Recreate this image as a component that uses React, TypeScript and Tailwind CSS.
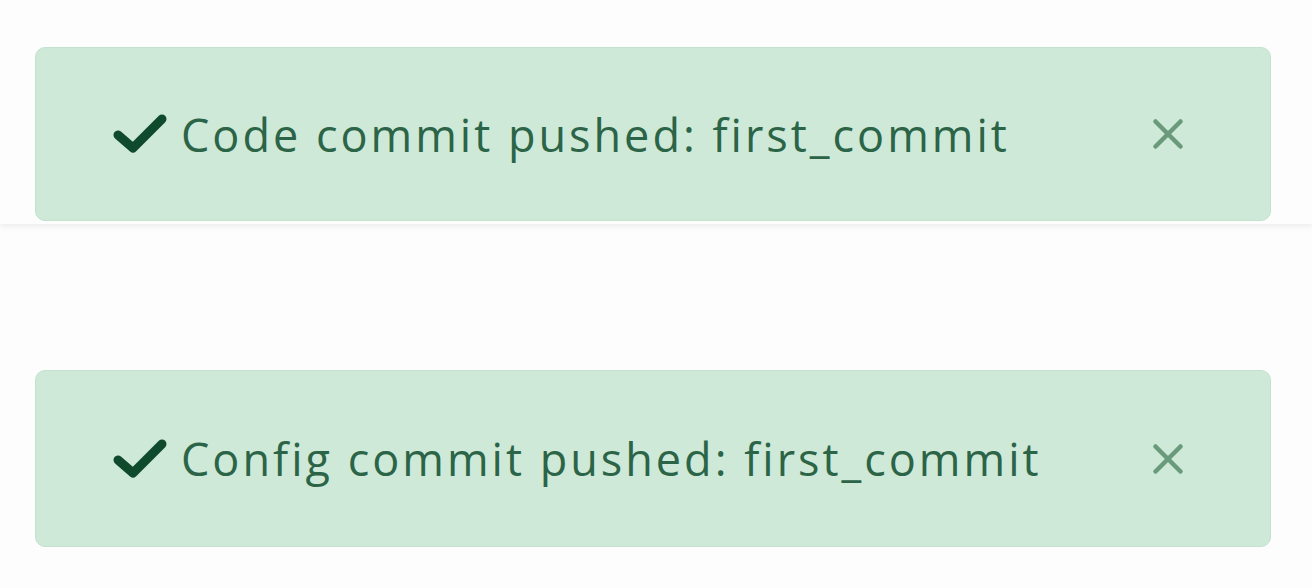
import { X } from 'lucide-react';

function CheckIcon() {
  return (
    <svg width="54" height="42" viewBox="0 0 54 42" fill="none" className="shrink-0">
      <path
        d="M5 22 L20 35 L49 6"
        stroke="#0f4a2c"
        strokeWidth="9"
        strokeLinecap="round"
        strokeLinejoin="round"
      />
    </svg>
  );
}

function Toast({ message, className }: { message: string; className?: string }) {
  return (
    <div
      className={`ml-[35px] mr-[41px] flex items-center justify-between rounded-[10px] border border-[#c4e2cd] bg-[#cee9d8] pl-[77px] pr-[77px] ${className ?? ''}`}
    >
      <div className="flex items-center gap-[14px]">
        <CheckIcon />
        <span className="text-[45px] leading-none font-medium tracking-[3px] text-[#2b6446] font-['Open_Sans',sans-serif]">
          {message}
        </span>
      </div>
      <button type="button" className="text-[#6a9a7c]">
        <X size={50} strokeWidth={2.2} />
      </button>
    </div>
  );
}

export default function App() {
  return (
    <div className="h-[588px] w-[1312px] overflow-hidden bg-[#fdfdfd]">
      <div className="h-[224px] pt-[47px] shadow-[0_3px_5px_rgba(0,0,0,0.06)]">
        <Toast message="Code commit pushed: first_commit" className="h-[174px]" />
      </div>
      <div className="pt-[146px]">
        <Toast message="Config commit pushed: first_commit" className="h-[177px]" />
      </div>
    </div>
  );
}
